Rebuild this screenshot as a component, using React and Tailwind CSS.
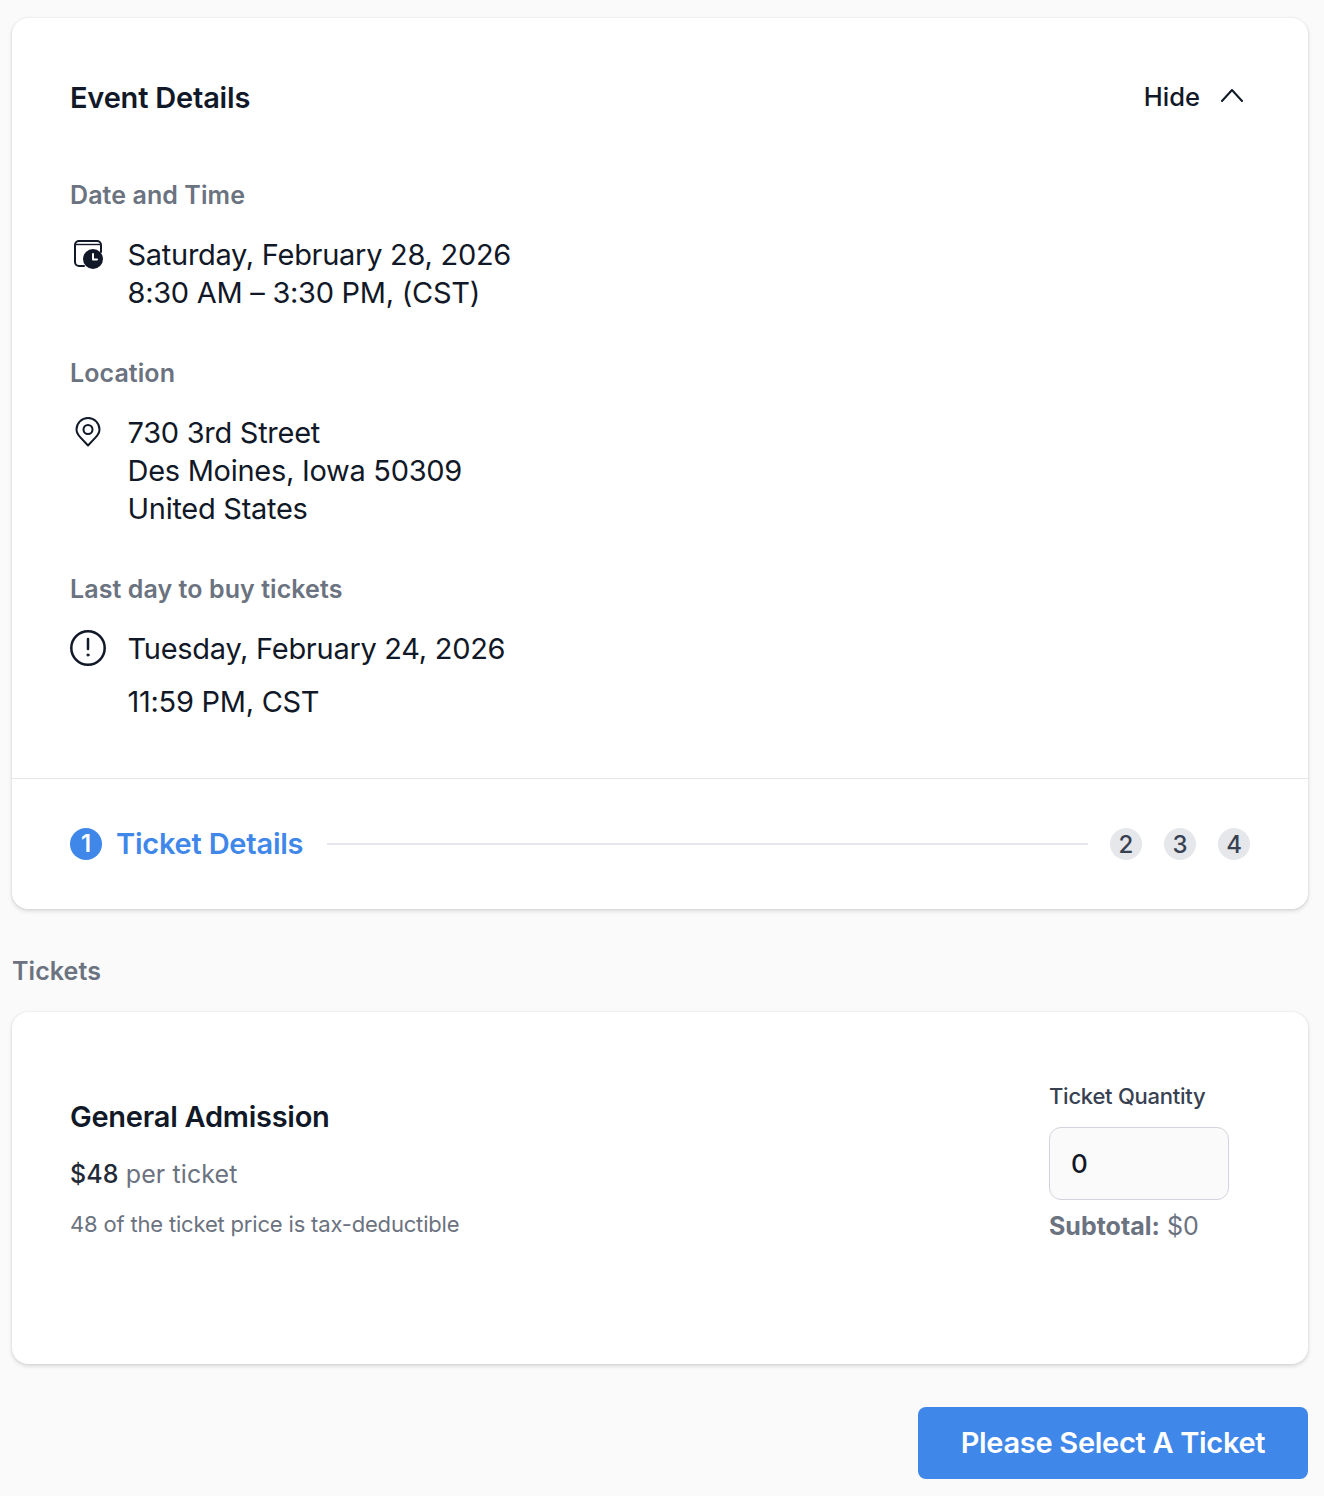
import React from 'react';

const CalendarClock = () => (
  <svg width="32" height="32" viewBox="0 0 32 32" fill="none" className="ml-[2px] mt-[2px]">
    <path d="M12 28H7A4 4 0 0 1 3 24V7a4 4 0 0 1 4-4h18a4 4 0 0 1 4 4v7" stroke="#111827" strokeWidth="2" strokeLinecap="round" />
    <path d="M3 6.5h26" stroke="#111827" strokeWidth="1.4" />
    <circle cx="21" cy="21" r="10" fill="#111827" />
    <path d="M21 16v5.5h4" stroke="#fff" strokeWidth="2" strokeLinecap="round" strokeLinejoin="round" />
  </svg>
);

const Pin = () => (
  <svg width="32" height="32" viewBox="0 0 32 32" fill="none" stroke="#111827" strokeWidth="2" strokeLinejoin="round" className="ml-[2px] mt-[2px]">
    <path d="M16 29.5 8.6 21.6C6.7 19.6 4.5 17.3 4.5 13.5a11.5 11.5 0 0 1 23 0c0 3.8-2.2 6.1-4.1 8.1Z" />
    <circle cx="16" cy="13.5" r="4.5" />
  </svg>
);

const Alert = () => (
  <svg width="36" height="36" viewBox="0 0 36 36" fill="none" stroke="#111827" strokeWidth="2.5" strokeLinecap="round">
    <circle cx="18" cy="18" r="16.7" />
    <path d="M18 9v10" />
    <circle cx="18" cy="25" r="1.1" fill="#111827" strokeWidth="1" />
  </svg>
);

const Label = ({ children, className = '' }) => (
  <div className={`text-[25px] leading-[36px] tracking-[0.08px] font-semibold text-[#6b7280] ${className}`}>{children}</div>
);

const InfoRow = ({ icon, children }) => (
  <div className="mt-[23px] flex text-[29px] leading-[38px] tracking-[-0.28px] text-[#111827]">
    <div className="w-[57.5px] shrink-0">{icon}</div>
    <div>{children}</div>
  </div>
);

const StepDot = ({ n }) => (
  <div className="w-8 h-8 pt-px rounded-full bg-[#e5e7eb] text-[#374151] text-[24px] font-medium flex items-center justify-center">{n}</div>
);

export default function App() {
  return (
    <div className="min-h-[1496px] bg-[#fafafa] pl-3 pr-4 pt-[18px] font-['Inter',sans-serif]">
      <div className="bg-white rounded-2xl shadow-[0_2px_4px_rgba(0,0,0,0.14),0_0_2px_rgba(0,0,0,0.1)]">
        <div className="px-[58px] pt-[60px] pb-[57px]">
          <div className="flex items-center justify-between h-10">
            <h2 className="text-[29px] tracking-[-0.2px] font-semibold text-[#111827]">Event Details</h2>
            <button className="flex items-center text-[25.5px] font-medium text-[#111827] mr-[6px] -mt-[2px]">
              Hide
              <svg width="24" height="14" viewBox="0 0 24 14" fill="none" stroke="#111827" strokeWidth="2" strokeLinecap="round" strokeLinejoin="round" className="ml-[20px] -mt-[5px]">
                <path d="M2 13 12 2l10 11" />
              </svg>
            </button>
          </div>
          <Label className="mt-[59px]">Date and Time</Label>
          <InfoRow icon={<CalendarClock />}>
            <div>Saturday, February 28, 2026</div>
            <div>8:30 AM – 3:30 PM, (CST)</div>
          </InfoRow>
          <Label className="mt-[43px]">Location</Label>
          <InfoRow icon={<Pin />}>
            <div>730 3rd Street</div>
            <div>Des Moines, Iowa 50309</div>
            <div>United States</div>
          </InfoRow>
          <Label className="mt-[43px]">Last day to buy tickets</Label>
          <InfoRow icon={<Alert />}>
            <div>Tuesday, February 24, 2026</div>
            <div className="mt-[15px]">11:59 PM, CST</div>
          </InfoRow>
        </div>
        <div className="border-t border-[#e5e7eb] h-[131px] px-[58px] flex items-center">
          <div className="w-8 h-8 rounded-full bg-[#3f87e8] text-white text-[24px] font-semibold flex items-center justify-center">1</div>
          <div className="ml-[15px] -translate-x-px text-[29px] tracking-[-0.22px] font-semibold text-[#3f87e8]">Ticket Details</div>
          <div className="flex-1 h-0.5 bg-[#e5e7eb] ml-[23px] mr-[22px]"></div>
          <div className="flex gap-[22px]">
            <StepDot n={2} />
            <StepDot n={3} />
            <StepDot n={4} />
          </div>
        </div>
      </div>

      <Label className="mt-[44px]">Tickets</Label>

      <div className="mt-[23px] h-[352px] bg-white rounded-2xl shadow-[0_2px_4px_rgba(0,0,0,0.14),0_0_2px_rgba(0,0,0,0.1)] pl-[58px] pr-[79px] flex justify-between">
        <div className="pt-[85px]">
          <h3 className="text-[29px] tracking-[-0.25px] leading-10 font-semibold text-[#111827]">General Admission</h3>
          <div className="mt-[19px] text-[25px] leading-[36px] tracking-[0.1px] text-[#6b7280]">
            <span className="font-medium text-[#1f2937]">$48</span> per ticket
          </div>
          <div className="mt-[16px] text-[22px] leading-8 tracking-[-0.18px] text-[#6b7280]">48 of the ticket price is tax-deductible</div>
        </div>
        <div className="pt-[68px] w-[180px]">
          <div className="text-[22px] leading-8 font-medium tracking-[-0.25px] text-[#374151] whitespace-nowrap">Ticket Quantity</div>
          <input readOnly value="0" className="mt-[15px] block w-[180px] h-[73px] rounded-xl border border-[#d1d5db] bg-[#fafafa] px-[21px] text-[26px] font-medium text-[#111827] outline-none" />
          <div className="mt-2 text-[25px] leading-[36px] text-[#6b7280] whitespace-nowrap">
            <span className="font-bold">Subtotal:</span> $0
          </div>
        </div>
      </div>

      <div className="mt-[43px] flex justify-end">
        <button className="w-[390px] h-[72px] rounded-lg bg-[#3f87e8] text-white text-[29px] tracking-[-0.3px] font-semibold">Please Select A Ticket</button>
      </div>
    </div>
  );
}
